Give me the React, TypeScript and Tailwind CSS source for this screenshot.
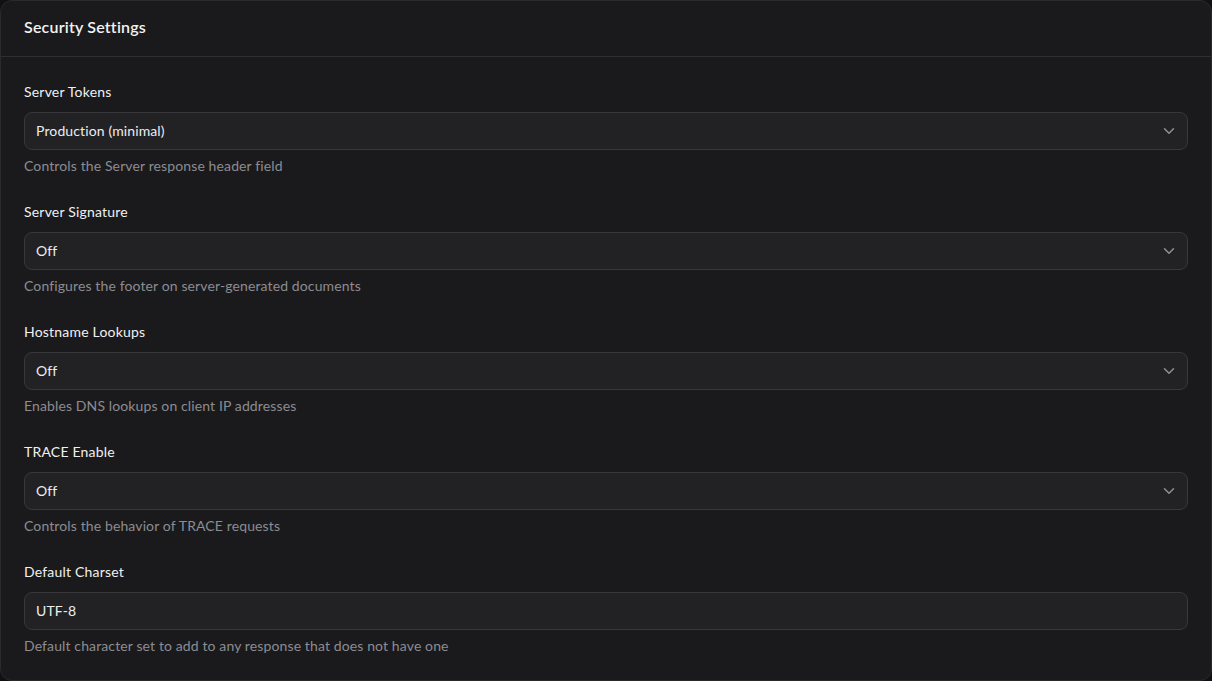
import { ChevronDown } from 'lucide-react'

type Field = {
  label: string
  value: string
  help: string
  kind: 'select' | 'input'
}

const fields: Field[] = [
  { label: 'Server Tokens', value: 'Production (minimal)', help: 'Controls the Server response header field', kind: 'select' },
  { label: 'Server Signature', value: 'Off', help: 'Configures the footer on server-generated documents', kind: 'select' },
  { label: 'Hostname Lookups', value: 'Off', help: 'Enables DNS lookups on client IP addresses', kind: 'select' },
  { label: 'TRACE Enable', value: 'Off', help: 'Controls the behavior of TRACE requests', kind: 'select' },
  { label: 'Default Charset', value: 'UTF-8', help: 'Default character set to add to any response that does not have one', kind: 'input' },
]

export default function App() {
  return (
    <div className="min-h-screen bg-[#111113] font-['Lato','Open_Sans',sans-serif] tracking-[0.12px]">
      <div className="flex h-[681px] flex-col overflow-hidden rounded-xl border border-[#2a2a2e] bg-[#1a1a1c]">
        <div className="flex h-[56px] shrink-0 items-center border-b border-[#2e2e32] px-[23px] pb-[3px]">
          <h2 className="text-base font-semibold tracking-[0.2px] text-[#f2f2f3]">Security Settings</h2>
        </div>

        <div className="flex flex-col gap-[26px] px-[23px] pt-[25px]">
          {fields.map((f) => (
            <div key={f.label} className="flex flex-col">
              <label className="text-sm leading-5 font-normal tracking-[0.2px] text-[#f0f0f2]">{f.label}</label>
              <div className="mt-[10px] flex h-[38px] items-center justify-between rounded-lg border border-[#38383c] bg-[#222225] pr-[9px] pl-[11px]">
                <span className="text-sm text-[#ededef]">{f.value}</span>
                {f.kind === 'select' && (
                  <ChevronDown className="h-[18px] w-[18px] text-[#8a8f9a]" strokeWidth={2} />
                )}
              </div>
              <p className="mt-[6px] text-sm leading-5 text-[#8c8c92]">{f.help}</p>
            </div>
          ))}
        </div>
      </div>
    </div>
  )
}
